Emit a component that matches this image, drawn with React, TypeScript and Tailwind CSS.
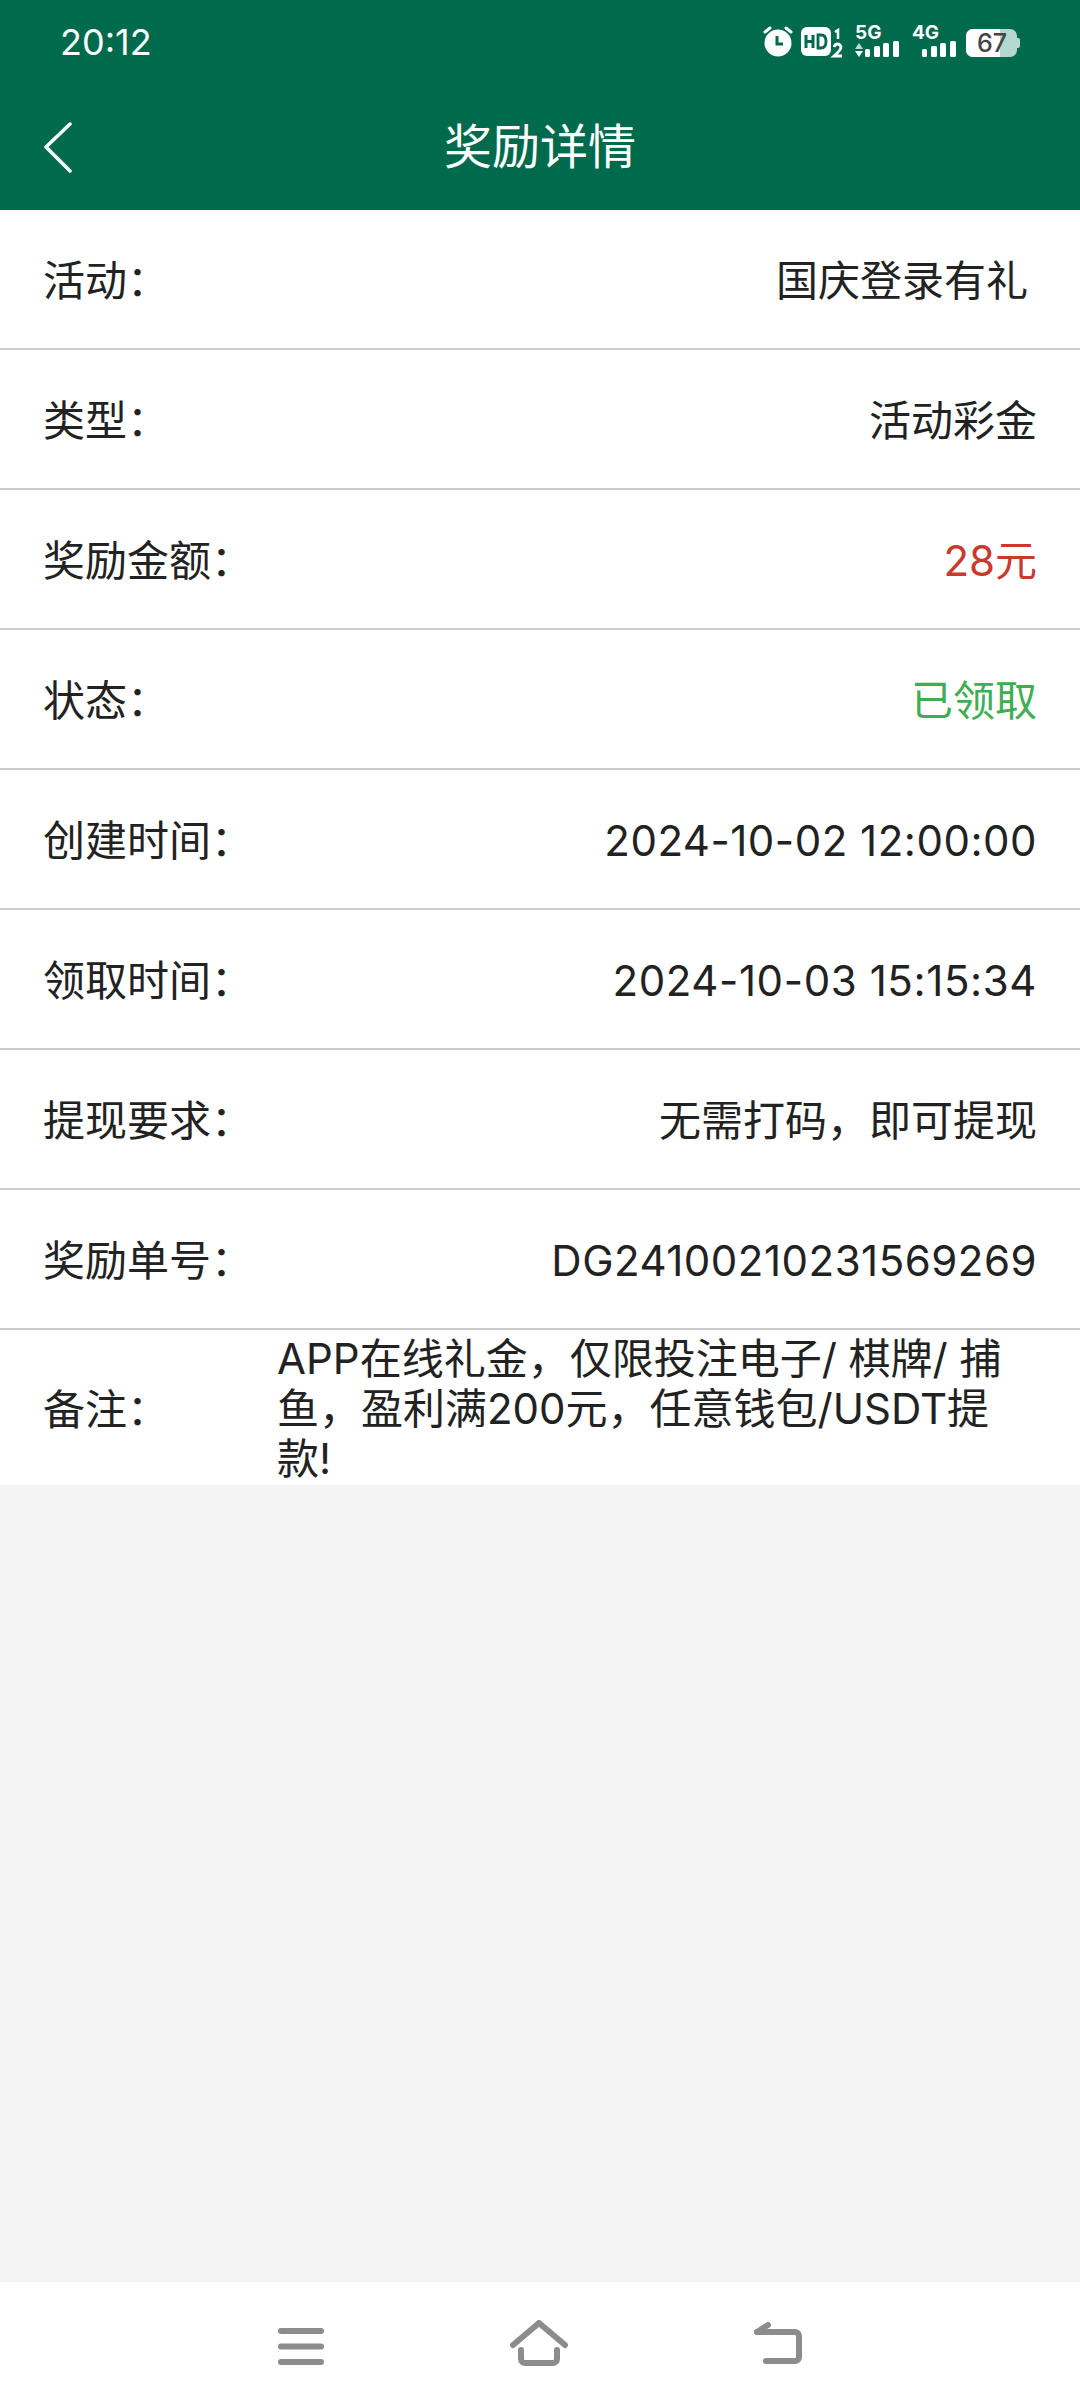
const F = '[font-family:Inter,"Noto_Sans_CJK_SC",sans-serif]';
const COLON = "\uFF1A";
const COMMA = "\uFF0C";

function Row({ label, value, color = "text-[#222222]", pr = "pr-[43px]", track = "" }: { label: string; value: string; color?: string; pr?: string; track?: string }) {
  return (
    <div className={`flex h-[140px] items-center justify-between border-b-2 border-[#cccccc] pl-[43px] pt-[3px] ${pr}`}>
      <span className="text-[42px] text-[#222222]">{label + COLON}</span>
      <span className={`text-[42px] ${color} ${track}`}>{value}</span>
    </div>
  );
}

function Bars() {
  return (
    <>
      <rect x="10" y="23" width="5" height="8" rx="1.500" fill="#fff" />
      <rect x="19" y="20" width="6" height="11" rx="1.500" fill="#fff" />
      <rect x="28" y="17" width="6" height="14" rx="1.500" fill="#fff" />
      <rect x="38" y="15" width="6" height="16" rx="1.500" fill="#fff" />
    </>
  );
}

export default function App() {
  return (
    <div className={`flex h-[2408px] w-[1080px] flex-col bg-[#f4f4f4] ${F}`}>
      <header className="flex h-[210px] flex-col bg-[#006a4d] text-white">
        <div className="flex h-[84px] items-center justify-between pl-[60px] pr-[60px]">
          <span className="text-[36px] leading-none">20:12</span>
          <div className="flex items-center">
            <svg width="30" height="32" viewBox="0 0 30 32" fill="none">
              <circle cx="15" cy="17" r="13.500" fill="#fff" />
              <path d="M14 10v8h6" stroke="#006a4d" strokeWidth="3" />
              <path d="M2 6l5-4M28 6l-5-4" stroke="#fff" strokeWidth="3" strokeLinecap="round" />
            </svg>
            <svg width="44" height="32" viewBox="0 0 44 32" fill="none" className="ml-[8px]">
              <rect x="0" y="1" width="30" height="29" rx="6" fill="#fff" />
              <path d="M5 9v13M12 9v13M5 15.500h7" stroke="#006a4d" strokeWidth="3" />
              <path d="M17 9h3q5 0 5 6.500t-5 6.500h-3z" stroke="#006a4d" strokeWidth="2.800" />
              <path d="M34 6l3-2v9" stroke="#fff" strokeWidth="2.500" />
              <path d="M33 21q1-3 3.500-3t3.500 3q0 3-7 9h8" stroke="#fff" strokeWidth="2.800" />
            </svg>
            <div className="relative ml-[10px] h-[32px] w-[44px]">
              <span className="absolute left-0 top-[-4px] text-[19px] font-bold leading-[22px] text-white">5G</span>
              <svg width="44" height="32" viewBox="0 0 44 32" className="absolute left-0 top-0">
                <path d="M0 23l4-6 4 6z" fill="#fff" opacity="0.75" />
                <path d="M0 25l4 6 4-6z" fill="#fff" />
                <Bars />
              </svg>
            </div>
            <div className="relative ml-[13px] h-[32px] w-[44px]">
              <span className="absolute left-0 top-[-4px] text-[19px] font-bold leading-[22px] text-white">4G</span>
              <svg width="44" height="32" viewBox="0 0 44 32" className="absolute left-0 top-0">
                <Bars />
              </svg>
            </div>
            <div className="relative ml-[10px] mt-[2px] h-[28px] w-[54px]">
              <svg width="54" height="28" viewBox="0 0 54 28" className="absolute left-0 top-0">
                <rect x="0" y="0" width="51" height="28" rx="7" fill="#b5d8cd" />
                <path d="M7 0h27v28H7a7 7 0 0 1-7-7V7a7 7 0 0 1 7-7z" fill="#fff" />
                <path d="M51 9h1a2 2 0 0 1 2 2v6a2 2 0 0 1-2 2h-1z" fill="#b5d8cd" />
              </svg>
              <span className="absolute left-[11px] top-0 text-[25px] font-medium leading-[28px] text-[#444444]">67</span>
            </div>
          </div>
        </div>
        <div className="relative flex h-[126px] items-center justify-center">
          <svg width="32" height="52" viewBox="0 0 32 52" fill="none" className="absolute left-[43px] top-[38px]">
            <path d="M27 2L3 25l24 24" stroke="#fff" strokeWidth="3.500" strokeLinecap="round" strokeLinejoin="round" />
          </svg>
          <h1 className="text-[48px] font-normal leading-none">奖励详情</h1>
        </div>
      </header>

      <main className="bg-white">
        <Row label="活动" value="国庆登录有礼" pr="pr-[52px]" />
        <Row label="类型" value="活动彩金" />
        <Row label="奖励金额" value="28元" color="text-[#c9392c]" />
        <Row label="状态" value="已领取" color="text-[#3fae52]" />
        <Row label="创建时间" value="2024-10-02 12:00:00" track="tracking-[0.5px]" />
        <Row label="领取时间" value="2024-10-03 15:15:34" track="tracking-[0.6px]" />
        <Row label="提现要求" value={"无需打码" + COMMA + "即可提现"} />
        <Row label="奖励单号" value="DG24100210231569269" track="tracking-[0.5px]" />
        <div className="flex h-[155px] items-center pl-[43px] pt-[3px]">
          <span className="w-[234px] shrink-0 text-[42px] text-[#222222]">{"备注" + COLON}</span>
          <p className="w-[740px] text-[42px] leading-[50px] text-[#222222]">
            {"APP在线礼金" + COMMA + "仅限投注电子/ 棋牌/ 捕鱼" + COMMA + "盈利满200元" + COMMA + "任意钱包/USDT提款!"}
          </p>
        </div>
      </main>

      <div className="flex-1" />

      <nav className="flex h-[126px] items-start justify-center gap-[186px] bg-white pt-[46px]">
        <svg width="46" height="40" viewBox="0 0 46 40" fill="none" stroke="#8c8c8c" strokeWidth="6" strokeLinecap="round">
          <path d="M3 3h40M3 18.500h40M3 34h40" />
        </svg>
        <svg width="58" height="46" viewBox="0 0 58 46" fill="none" stroke="#8c8c8c" strokeWidth="6" strokeLinecap="round" strokeLinejoin="round" className="mt-[-8px]">
          <path d="M3 25L29 3l26 22" />
          <path d="M11 30v9a4 4 0 0 0 4 4h28a4 4 0 0 0 4-4v-9" />
        </svg>
        <svg width="48" height="44" viewBox="0 0 48 44" fill="none" stroke="#8c8c8c" strokeWidth="6" strokeLinecap="round" strokeLinejoin="round" className="mt-[-7px]">
          <path d="M3 11h38a4 4 0 0 1 4 4v21a4 4 0 0 1-4 4H12" />
          <path d="M3 11l11-7" />
        </svg>
      </nav>
    </div>
  );
}
